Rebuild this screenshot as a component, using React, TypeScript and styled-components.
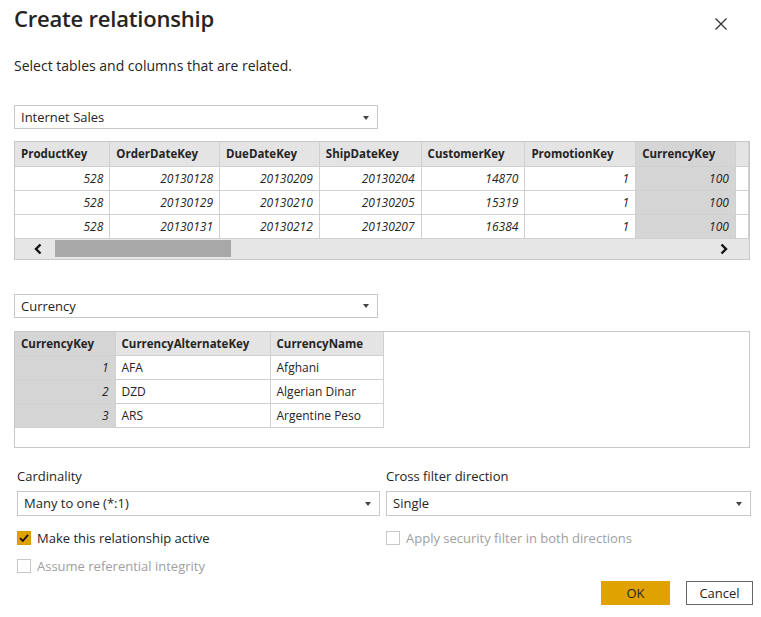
import React from "react";
import styled, { createGlobalStyle } from "styled-components";

const Global = createGlobalStyle`
  html, body { margin: 0; padding: 0; background: #fff; }
  body { font-family: "Segoe UI", "Open Sans", "Noto Sans", sans-serif; color: #252423; }
  * { box-sizing: border-box; }
`;

const Page = styled.div`
  width: 761px;
  height: 617px;
  padding: 0 10px 0 14px;
  display: flex;
  flex-direction: column;
  overflow: hidden;
`;

const TitleRow = styled.div`
  height: 36px;
  display: flex;
  align-items: center;
  justify-content: space-between;
`;

const Title = styled.h1`
  margin: 0;
  font-size: 22px;
  font-weight: 600;
  line-height: 28px;
  color: #252423;
  letter-spacing: -0.2px;
`;

const CloseBtn = styled.button`
  width: 20px;
  height: 20px;
  margin: 12px 20px 0 0;
  padding: 0;
  border: none;
  background: transparent;
  display: flex;
  align-items: center;
  justify-content: center;
`;

const Subtitle = styled.p`
  margin: 20px 0 0;
  font-size: 14px;
  line-height: 20px;
  color: #252423;
`;

const Select = styled.div<{ $w: number; $mt: number; $h?: number; $fs?: number }>`
  width: ${(p) => p.$w}px;
  height: ${(p) => p.$h ?? 24}px;
  margin-top: ${(p) => p.$mt}px;
  border: 1px solid #c8c8c8;
  background: #fff;
  display: flex;
  align-items: center;
  justify-content: space-between;
  padding: 0 8px 0 6px;
  font-size: ${(p) => p.$fs ?? 13}px;
  color: #252423;
`;

const Arrow = styled.span`
  width: 0;
  height: 0;
  border-left: 3.5px solid transparent;
  border-right: 3.5px solid transparent;
  border-top: 4px solid #444;
  margin-top: 1px;
`;

const GridBox = styled.div<{ $mt: number; $h?: number }>`
  width: 736px;
  margin-top: ${(p) => p.$mt}px;
  border: 1px solid #c8c8c8;
  background: #fff;
  height: ${(p) => (p.$h ? `${p.$h}px` : "auto")};
`;

const Table = styled.table`
  border-collapse: collapse;
  table-layout: fixed;
  font-size: 12px;
`;

const Th = styled.th<{ $sel?: boolean }>`
  height: 24px;
  background: ${(p) => (p.$sel ? "#d5d5d5" : "#e4e4e4")};
  border: 1px solid #d0d0d0;
  border-top: none;
  text-align: left;
  font-weight: 700;
  font-size: 11.5px;
  padding: 0 6px;
  white-space: nowrap;
  overflow: hidden;
  color: #252423;
  &:first-child { border-left: none; }
`;

const Td = styled.td<{ $sel?: boolean; $num?: boolean }>`
  height: 24px;
  background: ${(p) => (p.$sel ? "#d5d5d5" : "#fff")};
  border: 1px solid #d0d0d0;
  text-align: ${(p) => (p.$num ? "right" : "left")};
  font-style: ${(p) => (p.$num ? "italic" : "normal")};
  padding: 0 6px;
  white-space: nowrap;
  overflow: hidden;
  color: #252423;
  &:first-child { border-left: none; }
`;

const ScrollBar = styled.div`
  height: 20px;
  background: #e6e6e6;
  display: flex;
  align-items: center;
  padding: 0 18px 0 16px;
`;

const ScrollArrow = styled.span`
  width: 14px;
  display: flex;
  align-items: center;
  justify-content: center;
`;

const Thumb = styled.div`
  width: 176px;
  height: 17px;
  background: #a8a8a8;
  margin-left: 10px;
`;

const Spacer = styled.div`
  flex: 1;
`;

const Options = styled.div`
  display: grid;
  grid-template-columns: 363px 365px;
  column-gap: 6px;
  margin-left: 3px;
  margin-top: 18px;
`;

const Field = styled.div`
  display: flex;
  flex-direction: column;
`;

const Label = styled.div`
  font-size: 13px;
  line-height: 20px;
  color: #252423;
`;

const Check = styled.label<{ $disabled?: boolean; $mt: number }>`
  display: flex;
  align-items: center;
  gap: 6px;
  height: 20px;
  margin-top: ${(p) => p.$mt}px;
  font-size: 13px;
  color: ${(p) => (p.$disabled ? "#a0a0a0" : "#252423")};
`;

const Box = styled.span<{ $checked?: boolean }>`
  width: 14px;
  height: 14px;
  border: 1px solid ${(p) => (p.$checked ? "#d89c00" : "#c8c8c8")};
  background: ${(p) => (p.$checked ? "#e0a200" : "#fff")};
  display: flex;
  align-items: center;
  justify-content: center;
  flex-shrink: 0;
`;

const ButtonRow = styled.div`
  display: flex;
  justify-content: flex-end;
  gap: 16px;
  margin-top: 5px;
  margin-right: -2px;
`;

const Button = styled.button<{ $primary?: boolean; $w: number }>`
  width: ${(p) => p.$w}px;
  height: 24px;
  font-family: inherit;
  font-size: 13px;
  color: #252423;
  background: ${(p) => (p.$primary ? "#e0a200" : "#fff")};
  border: 1px solid ${(p) => (p.$primary ? "#e0a200" : "#666")};
  padding: 0;
`;

const ChevronLeft = () => (
  <svg width="10" height="12" viewBox="0 0 10 12">
    <path d="M7.5 1.5 L3 6 L7.5 10.5" fill="none" stroke="#111" strokeWidth="2.4" />
  </svg>
);
const ChevronRight = () => (
  <svg width="10" height="12" viewBox="0 0 10 12">
    <path d="M2.5 1.5 L7 6 L2.5 10.5" fill="none" stroke="#111" strokeWidth="2.4" />
  </svg>
);

const salesCols = [
  { name: "ProductKey", w: 95 },
  { name: "OrderDateKey", w: 110 },
  { name: "DueDateKey", w: 100 },
  { name: "ShipDateKey", w: 102 },
  { name: "CustomerKey", w: 104 },
  { name: "PromotionKey", w: 111 },
  { name: "CurrencyKey", w: 100 },
];

const salesRows = [
  ["528", "20130128", "20130209", "20130204", "14870", "1", "100"],
  ["528", "20130129", "20130210", "20130205", "15319", "1", "100"],
  ["528", "20130131", "20130212", "20130207", "16384", "1", "100"],
];

const currencyCols = [
  { name: "CurrencyKey", w: 100 },
  { name: "CurrencyAlternateKey", w: 155 },
  { name: "CurrencyName", w: 113 },
];

const currencyRows = [
  ["1", "AFA", "Afghani"],
  ["2", "DZD", "Algerian Dinar"],
  ["3", "ARS", "Argentine Peso"],
];

const CheckMark = () => (
  <svg width="12" height="12" viewBox="0 0 12 12">
    <path d="M2 6.2 L4.8 9 L10 2.8" fill="none" stroke="#111" strokeWidth="1.8" />
  </svg>
);

export default function App() {
  return (
    <>
      <Global />
      <Page>
        <TitleRow>
          <Title>Create relationship</Title>
          <CloseBtn aria-label="Close">
            <svg width="14" height="14" viewBox="0 0 14 14">
              <path d="M1.5 1.5 L12.5 12.5 M12.5 1.5 L1.5 12.5" stroke="#333" strokeWidth="1.3" />
            </svg>
          </CloseBtn>
        </TitleRow>
        <Subtitle>Select tables and columns that are related.</Subtitle>

        <Select $w={364} $mt={29}>
          <span>Internet Sales</span>
          <Arrow />
        </Select>

        <GridBox $mt={12}>
          <Table>
            <colgroup>
              {salesCols.map((c) => (
                <col key={c.name} style={{ width: c.w }} />
              ))}
              <col style={{ width: 13 }} />
            </colgroup>
            <thead>
              <tr>
                {salesCols.map((c) => (
                  <Th key={c.name} $sel={c.name === "CurrencyKey"}>
                    {c.name}
                  </Th>
                ))}
                <Th />
              </tr>
            </thead>
            <tbody>
              {salesRows.map((r, i) => (
                <tr key={i}>
                  {r.map((v, j) => (
                    <Td key={j} $num $sel={j === 6}>
                      {v}
                    </Td>
                  ))}
                  <Td />
                </tr>
              ))}
            </tbody>
          </Table>
          <ScrollBar>
            <ScrollArrow>
              <ChevronLeft />
            </ScrollArrow>
            <Thumb />
            <Spacer />
            <ScrollArrow>
              <ChevronRight />
            </ScrollArrow>
          </ScrollBar>
        </GridBox>

        <Select $w={364} $mt={34}>
          <span>Currency</span>
          <Arrow />
        </Select>

        <GridBox $mt={13} $h={117}>
          <Table>
            <colgroup>
              {currencyCols.map((c) => (
                <col key={c.name} style={{ width: c.w }} />
              ))}
            </colgroup>
            <thead>
              <tr>
                {currencyCols.map((c, i) => (
                  <Th key={c.name} $sel={i === 0}>
                    {c.name}
                  </Th>
                ))}
              </tr>
            </thead>
            <tbody>
              {currencyRows.map((r, i) => (
                <tr key={i}>
                  {r.map((v, j) => (
                    <Td key={j} $num={j === 0} $sel={j === 0}>
                      {v}
                    </Td>
                  ))}
                </tr>
              ))}
            </tbody>
          </Table>
        </GridBox>

        <Options>
          <Field>
            <Label>Cardinality</Label>
            <Select $w={363} $mt={5} $h={25} $fs={13}>
              <span>Many to one (*:1)</span>
              <Arrow />
            </Select>
            <Check $mt={12}>
              <Box $checked>
                <CheckMark />
              </Box>
              Make this relationship active
            </Check>
            <Check $mt={8} $disabled>
              <Box />
              Assume referential integrity
            </Check>
          </Field>
          <Field>
            <Label>Cross filter direction</Label>
            <Select $w={365} $mt={5} $h={25} $fs={13}>
              <span>Single</span>
              <Arrow />
            </Select>
            <Check $mt={12} $disabled>
              <Box />
              Apply security filter in both directions
            </Check>
          </Field>
        </Options>

        <ButtonRow>
          <Button $primary $w={69}>OK</Button>
          <Button $w={67}>Cancel</Button>
        </ButtonRow>
      </Page>
    </>
  );
}
